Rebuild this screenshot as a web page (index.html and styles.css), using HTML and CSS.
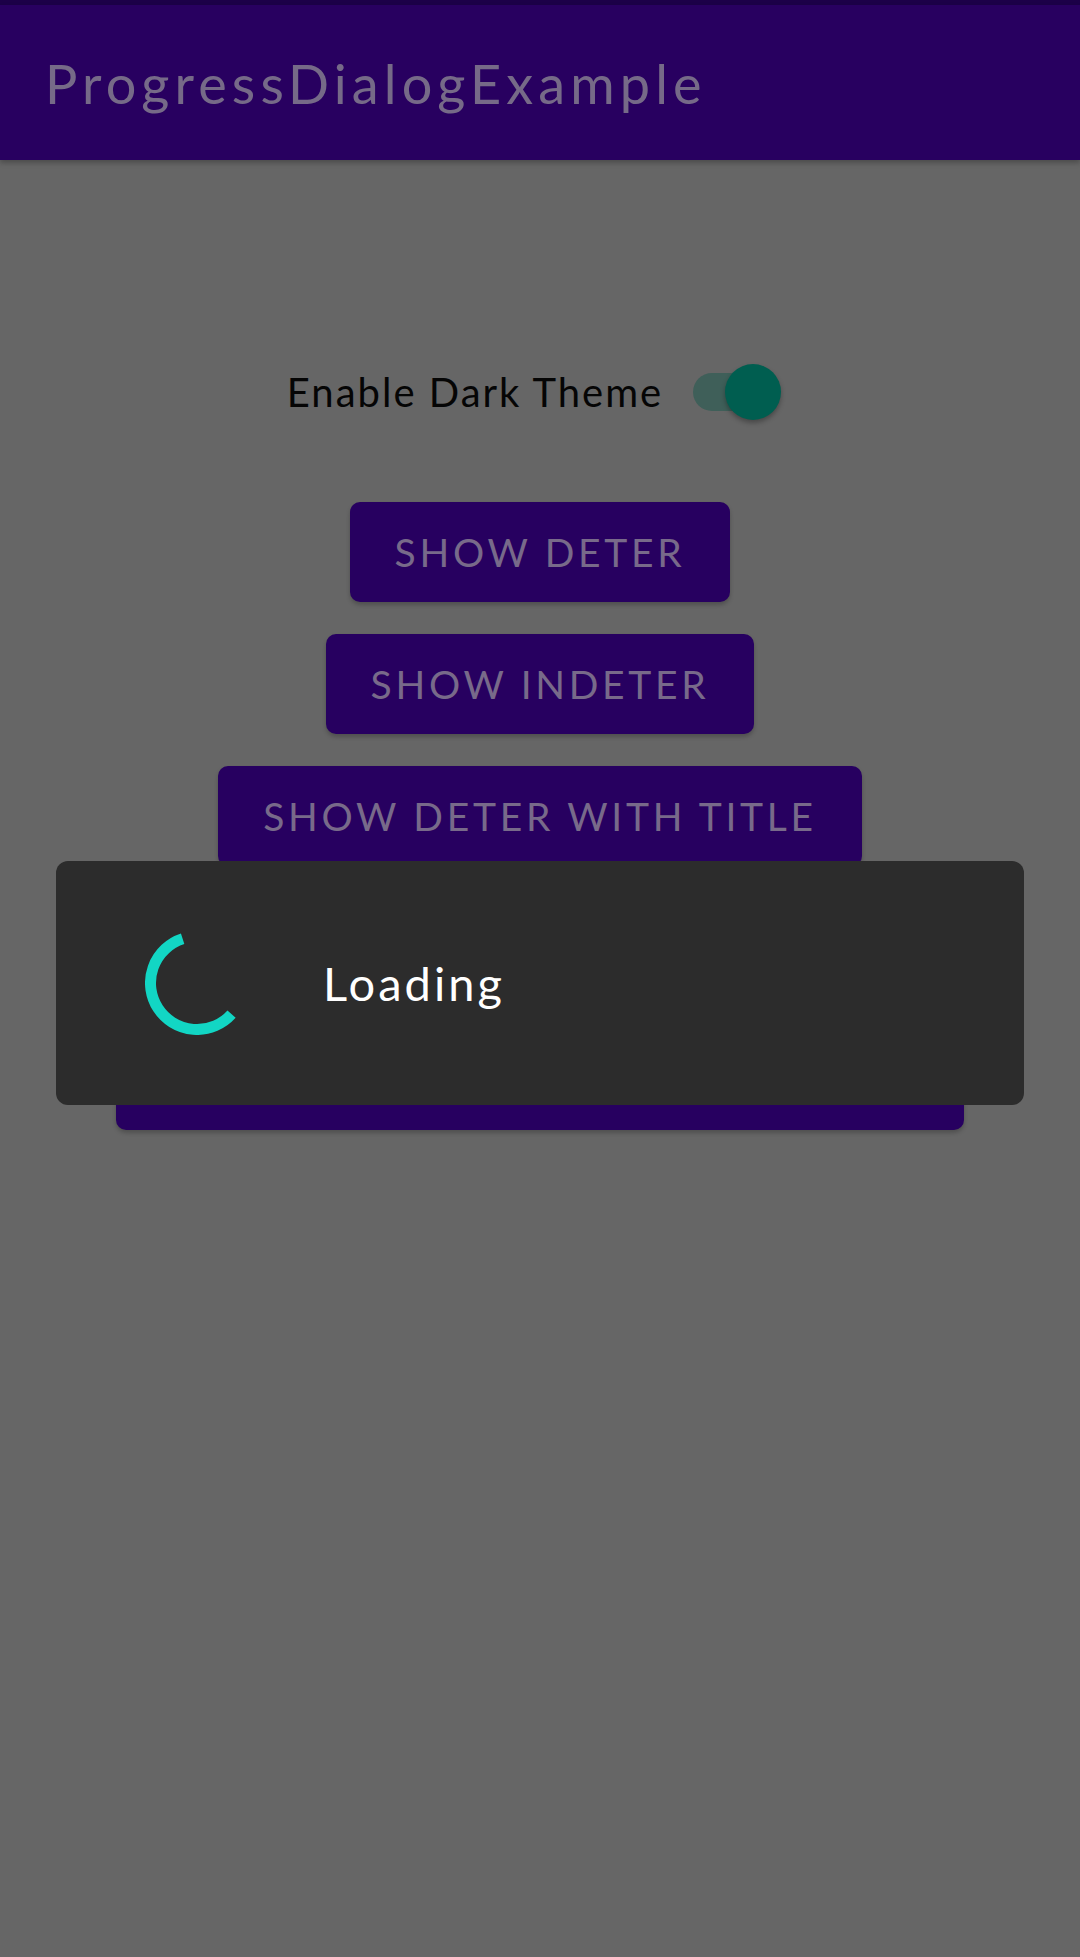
FILE: index.html
```html
<!DOCTYPE html>
<html lang="en">
<head>
<meta charset="utf-8">
<title>ProgressDialogExample</title>
<link rel="stylesheet" href="styles.css">
</head>
<body>
<div class="status"></div>
<header class="appbar"><h1 class="title">ProgressDialogExample</h1></header>
<main class="content">
  <div class="switch-row">
    <span class="switch-label">Enable Dark Theme</span>
    <span class="switch"><span class="track"></span><span class="thumb"></span></span>
  </div>
  <div class="buttons">
    <button class="btn">Show Deter</button>
    <button class="btn">Show Indeter</button>
    <button class="btn">Show Deter with Title</button>
    <button class="btn">Show Indeter with Title</button>
    <button class="btn">Show Custom Progress Dialog</button>
  </div>
</main>
<div class="dialog">
  <svg class="spinner" width="104" height="104" viewBox="0 0 104 104">
    <path d="M37.63 7.78 A46.5 46.5 0 1 0 86.56 83.11" fill="none" stroke="#12d6c4" stroke-width="11"/>
  </svg>
  <span class="dialog-text">Loading</span>
</div>
</body>
</html>
```
FILE: styles.css
```css
html, body {
  margin: 0;
  padding: 0;
}
body {
  width: 1080px;
  height: 1957px;
  overflow: hidden;
  background: #666666;
  font-family: Lato, "Liberation Sans", sans-serif;
}
.status {
  height: 5px;
  background: #1c0048;
}
.appbar {
  height: 155px;
  background: #280060;
  display: flex;
  align-items: center;
  padding-left: 45px;
  box-shadow: 0 3px 5px rgba(0, 0, 0, 0.25);
  position: relative;
}
.title {
  margin: 0;
  font-size: 54px;
  font-weight: 400;
  color: #766a88;
  letter-spacing: 0.095em;
  padding-top: 2px;
}
.content {
  padding-top: 188px;
  display: flex;
  flex-direction: column;
  align-items: center;
}
.switch-row {
  height: 88px;
  display: flex;
  align-items: center;
  gap: 30px;
  padding-right: 12px;
}
.switch-label {
  font-size: 40px;
  color: #050505;
  letter-spacing: 0.05em;
}
.switch {
  position: relative;
  width: 88px;
  height: 56px;
}
.track {
  position: absolute;
  left: 0;
  top: 9px;
  width: 74px;
  height: 38px;
  border-radius: 19px;
  background: #3f5f59;
}
.thumb {
  position: absolute;
  right: 0;
  top: 0;
  width: 56px;
  height: 56px;
  border-radius: 50%;
  background: #005e50;
  box-shadow: 0 3px 5px rgba(0, 0, 0, 0.3);
}
.buttons {
  margin-top: 66px;
  display: flex;
  flex-direction: column;
  align-items: center;
  gap: 32px;
}
.btn {
  height: 100px;
  padding: 0 45px;
  border: none;
  border-radius: 10px;
  background: #270060;
  color: #786a8a;
  font-family: Lato, "Liberation Sans", sans-serif;
  font-size: 39px;
  text-transform: uppercase;
  letter-spacing: 0.095em;
  box-shadow: 0 3px 4px rgba(0, 0, 0, 0.22);
}
.dialog {
  position: fixed;
  left: 56px;
  top: 861px;
  width: 879px;
  height: 244px;
  padding-left: 89px;
  background: #2c2c2c;
  border-radius: 12px;
  display: flex;
  align-items: center;
  gap: 74px;
}
.spinner {
  display: block;
  flex: none;
}
.dialog-text {
  color: #ffffff;
  font-size: 47px;
  letter-spacing: 0.065em;
}
```
